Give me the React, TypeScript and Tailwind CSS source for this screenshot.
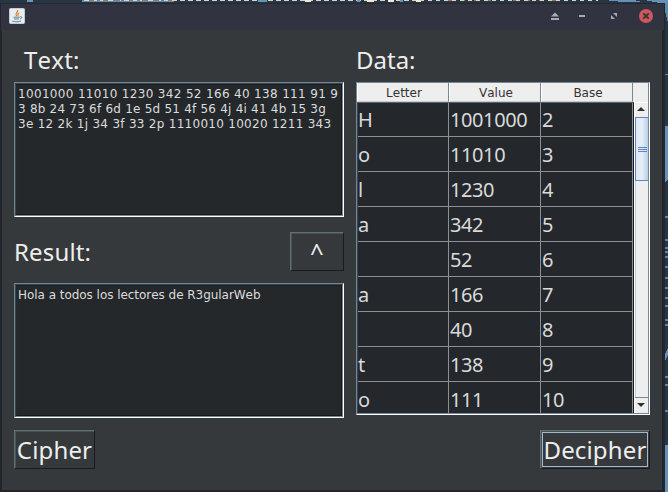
import React from "react";

const rows = [
  ["H", "1001000", "2"],
  ["o", "11010", "3"],
  ["l", "1230", "4"],
  ["a", "342", "5"],
  ["", "52", "6"],
  ["a", "166", "7"],
  ["", "40", "8"],
  ["t", "138", "9"],
  ["o", "111", "10"],
];

const lines = [
  "1001000 11010 1230 342 52 166 40 138 111 91 9",
  "3 8b 24 73 6f 6d 1e 5d 51 4f 56 4j 4i 41 4b 15 3g",
  "3e 12 2k 1j 34 3f 33 2p 1110010 10020 1211 343",
];

function Wallpaper() {
  return (
    <svg className="absolute inset-0" width="668" height="492" shapeRendering="crispEdges">
      <rect width="668" height="492" fill="#263642" />
      <rect x="82" width="92" height="2" fill="#5f86ad" />
      <path d="M84 .5H420" stroke="#dcd3c4" strokeDasharray="5 3" />
      <path d="M90 .5H174M448 .5H560" stroke="#a5734f" strokeDasharray="4 9" />
      <path d="M305 1h6M367 1h7M388 1h6M416 1h5" stroke="#efe6d5" strokeWidth="2" />
      <path d="M420 .5H598" stroke="#dcd3c4" strokeDasharray="4 4" />
      <path d="M604 0h30l8 2h-20z" fill="#6690b8" />
      <path d="M644 0h24v3h-8z" fill="#6690b8" />
      <path d="M27 1h6M258 1h9M357 1h3M400 1h3" stroke="#6a93b8" strokeWidth="2" />
      <path d="M665 3h3v20l-3-12z" fill="#5f88ae" />
      <path d="M665 74.5h3" stroke="#5f88ae" />
      <path d="M665 126h3v53l-3 3z" fill="#6690b8" />
      <path d="M665 217h3M665 240h3M665 248h3M665 252h3M665 257h3M665 267h3M665 278h3M665 288h3M665 298h3M665 306h3M665 320h3M665 325h3M665 377h3M665 385h3M665 411h3" stroke="#5f84a3" strokeWidth="1.5" />
      <path d="M668 348v7l-3 6v-7zM665 445h3v47h-3z" fill="#6690b8" />
    </svg>
  );
}

function JavaIcon() {
  return (
    <svg width="16" height="16" viewBox="0 0 16 16" fill="none">
      <rect x=".5" y=".5" width="15" height="15" rx="1" fill="#e9edf0" stroke="#c1cbd2" />
      <path d="M8.7 2.2C9.2 4.5 5.4 5 7.5 8.2M10.2 4.8C7.8 5.7 9.8 6.7 8.6 8.2" stroke="#e07a2c" strokeWidth="1.2" />
      <path d="M4.5 9.2h6M5 11h5M3.3 13.2c3 .9 6.5.7 8.7-.2M10.8 8.8c2.8-.7 2.3 1.8.2 2.1" stroke="#5d7b95" strokeWidth="1" />
    </svg>
  );
}

function TitleBar() {
  return (
    <div className="flex h-[27px] w-[663px] shrink-0 items-start justify-between border-t border-[#252831] bg-[#313440] pl-2 pr-[11px]">
      <div className="mt-1"><JavaIcon /></div>
      <svg className="-mr-2 mt-[5px]" width="110" height="14" viewBox="0 0 110 14">
        <path d="M0 7.5L4 3.5L8 7.5zM0 9h8v2H0z" fill="#a7abb8" />
        <rect x="28" y="6" width="6" height="2" fill="#a7abb8" />
        <path d="M62 4h4v4zM60 6v4h4z" fill="#a7abb8" />
        <circle cx="95" cy="7" r="7" fill="#cc575d" />
        <path d="M92.3 4.3l5.4 5.4m0-5.4l-5.4 5.4" stroke="#2f343f" strokeWidth="1.8" />
      </svg>
    </div>
  );
}

function TextBox({ children }: { children: React.ReactNode }) {
  return (
    <div className="h-[135px] w-[330px] border border-b-white border-l-[#75838f] border-r-white border-t-[#75838f]">
      <div className="h-full border border-b-[#75889a] border-l-[#384650] border-r-[#75889a] border-t-[#384650]">
        <div className="h-full whitespace-pre border border-b-[#111820] border-l-[#202b31] border-r-[#111820] border-t-[#171e22] bg-[#24282b] pl-px pt-0.5 font-['DejaVu_Sans',sans-serif] text-[12px] leading-[15px] text-[#dcdcdc]">
          {children}
        </div>
      </div>
    </div>
  );
}

function Button({ children, className }: { children: React.ReactNode; className: string }) {
  return (
    <button className={`h-[39px] whitespace-nowrap border border-b-[#181c1e] border-l-[#60706f] border-r-[#181c1e] border-t-[#60706f] text-[24px] leading-[35px] tracking-[0.15px] text-[#eeeeec] shadow-[inset_1px_1px_0_#475254] ${className}`}>
      {children}
    </button>
  );
}

function Header({ children }: { children: string }) {
  return (
    <div className="h-[19px] w-[92px] border-b border-l border-r border-b-[#c5cbd0] border-l-white border-r-[#75889a] bg-[#eeeeee] pl-0.5 text-center font-['DejaVu_Sans',sans-serif] text-[12px] leading-[20px] text-[#333333]">
      {children}
    </div>
  );
}

function ScrollBar() {
  return (
    <div className="flex w-[14px] shrink-0 flex-col border-l border-white bg-[#eeeeee]">
      <div className="flex h-[15px] justify-center border-t border-white pr-0.5 pt-1">
        <svg width="8" height="5"><path d="M0 4L4 0L8 4z" fill="#333" /></svg>
      </div>
      <div className="flex h-[64px] flex-col items-center justify-center gap-px border-y border-l border-[#6382bf] bg-linear-to-r from-[#dce8f4] via-[#e6eef7] to-[#b8cfe5]">
        <div className="h-px w-[9px] bg-[#6382bf]" />
        <div className="h-px w-[9px] bg-[#6382bf]" />
        <div className="h-px w-[9px] bg-[#6382bf]" />
      </div>
      <div className="flex-1 border-l border-[#b8cfe5]" />
      <div className="flex h-4 justify-center border-t border-[#75889a] pr-0.5 pt-[5px]">
        <svg width="8" height="5"><path d="M0 0H8L4 4z" fill="#333" /></svg>
      </div>
    </div>
  );
}

function DataTable() {
  return (
    <div className="h-[333px] w-[294px] overflow-hidden border border-b-white border-l-[#75889a] border-r-white border-t-[#75889a]">
      <div className="flex h-full flex-col border-b border-r border-[#75889a]">
        <div className="flex h-[19px] shrink-0 bg-[#eeeeee]">
          <Header>Letter</Header>
          <Header>Value</Header>
          <Header>Base</Header>
        </div>
        <div className="flex min-h-0 flex-1">
          <div className="w-[277px] shrink-0 overflow-hidden border-l border-r border-t border-l-[#384650] border-r-[#181c20] border-t-[#59656f] bg-[#24272b]">
            {rows.map((r, i) => (
              <div key={i} className="flex h-[35px] border-b border-[#8d8f90] text-[20px] leading-[36px] text-[#dadada] first:h-[34px] first:leading-[34px]">
                <div className="w-[91px] border-r border-[#8d8f90]">{r[0]}</div>
                <div className="w-[92px] border-r border-[#8d8f90] pl-px tracking-[-0.4px]">{r[1]}</div>
                <div className="w-[92px] border-r border-[#8d8f90] pl-px tracking-[-0.4px]">{r[2]}</div>
              </div>
            ))}
          </div>
          <ScrollBar />
        </div>
      </div>
    </div>
  );
}

export default function App() {
  return (
    <div className="relative h-[492px] w-[668px] overflow-hidden font-['Noto_Sans',sans-serif] [font-kerning:none]">
      <Wallpaper />
      <div className="relative flex h-full flex-col pt-[3px]">
        <div className="flex h-[489px] w-[665px] flex-col bg-[#22252b] pl-px">
          <TitleBar />
          <div className="ml-px flex h-[460px] w-[660px] justify-between bg-[#35393c] pl-3 pr-3">
            <div className="flex w-[330px] flex-col">
              <h1 className="h-[52px] pl-[10px] pt-[13px] text-[24px] leading-[34px] tracking-[0.2px] text-[#eeeeec]">Text:</h1>
              <TextBox>
                <div className="tracking-[0.33px]">{lines[0]}</div>
                <div className="tracking-[0.22px]">{lines[1]}</div>
                <div className="tracking-[0.28px]">{lines[2]}</div>
              </TextBox>
              <div className="flex h-[66px] items-start justify-between pt-[15px]">
                <h2 className="pt-[3px] text-[24px] leading-[34px] tracking-[0.15px] text-[#eeeeec]">Result:</h2>
                <Button className="w-[54px]">^</Button>
              </div>
              <TextBox><div className="tracking-[-0.04px]">Hola a todos los lectores de R3gularWeb</div></TextBox>
              <Button className="mt-3 w-[81px]">Cipher</Button>
            </div>
            <div className="flex w-[294px] flex-col">
              <h2 className="h-[52px] pt-[13px] text-[24px] leading-[34px] text-[#eeeeec]">Data:</h2>
              <DataTable />
              <div className="mt-[15px] flex justify-end">
                <Button className="w-[110px] p-px">
                  <span className="flex h-[35px] items-center justify-center border border-[#a3b8cc]">Decipher</span>
                </Button>
              </div>
            </div>
          </div>
        </div>
      </div>
    </div>
  );
}
